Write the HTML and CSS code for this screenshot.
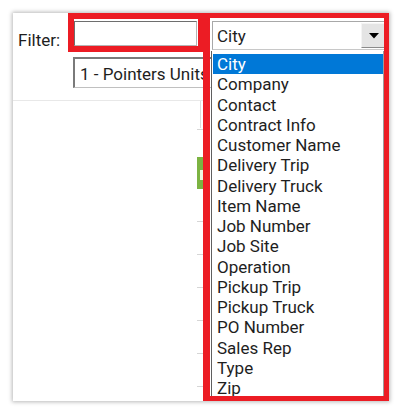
FILE: index.html
```html
<!DOCTYPE html>
<html>
<head>
<meta charset="utf-8">
<link rel="stylesheet" href="styles.css">
</head>
<body>
<div class="card">
  <div class="toolbar">
    <span class="label">Filter:</span>
    <div class="textbox"></div>
    <div class="combo combo-field">
      <span class="combo-text">City</span>
      <span class="combo-btn">
        <svg width="10" height="6" viewBox="0 0 10 6"><polygon points="0,0 10,0 5,5.5" fill="#000"/></svg>
      </span>
    </div>
  </div>
  <div class="row2">
    <div class="combo-unit"><span class="unit-text">1 - Pointers Units</span></div>
  </div>
  <div class="grid">
    <div class="grid-body"></div>
    <div class="grid-edge">
      <div class="vline"></div>
      <div class="tick t1"></div>
      <div class="green"><div class="notch"></div></div>
      <div class="tick t2"></div>
      <div class="tick t3"></div>
      <div class="tick t3"></div>
      <div class="tick t3"></div>
      <div class="tick t3"></div>
      <div class="tick t3"></div>
    </div>
  </div>

  <ul class="droplist">
    <li class="item selected">City</li>
    <li class="item">Company</li>
    <li class="item">Contact</li>
    <li class="item">Contract Info</li>
    <li class="item">Customer Name</li>
    <li class="item">Delivery Trip</li>
    <li class="item">Delivery Truck</li>
    <li class="item">Item Name</li>
    <li class="item">Job Number</li>
    <li class="item">Job Site</li>
    <li class="item">Operation</li>
    <li class="item">Pickup Trip</li>
    <li class="item">Pickup Truck</li>
    <li class="item">PO Number</li>
    <li class="item">Sales Rep</li>
    <li class="item">Type</li>
    <li class="item">Zip</li>
  </ul>

  <div class="mark mark-filter"></div>
  <div class="mark mark-list"></div>
</div>
</body>
</html>
```

FILE: styles.css
```css
html, body {
  margin: 0;
  padding: 0;
  background: #ffffff;
}
body {
  font-family: Roboto, "Noto Sans", sans-serif;
  color: #1e1e1e;
  width: 402px;
  height: 414px;
  overflow: hidden;
}
.card {
  position: relative;
  margin: 13px 0 0 13px;
  width: 376px;
  height: 388px;
  background: #ffffff;
  box-shadow: 0 0 4px 1px rgba(0, 0, 0, 0.28);
  display: flex;
  flex-direction: column;
}
.toolbar {
  display: flex;
  align-items: flex-start;
  padding: 8px 0 0 5px;
  height: 29px;
}
.label {
  width: 56px;
  font-size: 17px;
  line-height: 20px;
  margin-top: 9px;
}
.textbox {
  width: 121px;
  height: 23px;
  border: 1px solid #b4b4b4;
  border-top-color: #6e6e6e;
  border-left-color: #6e6e6e;
  background: #fff;
}
.combo-field {
  margin-left: 15px;
  width: 169px;
  height: 27px;
  border: 1px solid #a8a8a8;
  border-bottom-color: #c8c8c8;
  background: #fff;
  display: flex;
  align-items: center;
  justify-content: space-between;
  padding-left: 4px;
  box-sizing: content-box;
}
.combo-text {
  font-size: 17px;
  line-height: 20px;
  margin-top: 1px;
}
.combo-btn {
  width: 23px;
  height: 23px;
  background: #e4e4e4;
  border: 1px solid;
  border-color: #f4f4f4 #8a8a8a #8a8a8a #f4f4f4;
  display: flex;
  align-items: center;
  justify-content: center;
}
.row2 {
  margin-top: 7px;
  padding-left: 60px;
}
.combo-unit {
  width: 190px;
  height: 28px;
  border: 1px solid #c0c0c0;
  border-top: 2px solid #7a7a7a;
  border-left: 2px solid #7a7a7a;
  background: #fff;
  display: flex;
  align-items: center;
  padding-left: 5px;
  overflow: hidden;
  white-space: nowrap;
}
.unit-text {
  font-size: 17px;
  line-height: 20px;
  margin-top: 1px;
}
.grid {
  margin-top: 12px;
  width: 190px;
  flex: 1;
  display: flex;
  border-top: 1px solid #e8e8e8;
}
.grid-body {
  flex: 1;
}
.grid-edge {
  width: 6px;
  display: flex;
  flex-direction: column;
  align-items: flex-start;
}
.vline {
  margin-left: 3px;
  width: 1px;
  height: 27px;
  background: #dcdcdc;
}
.tick {
  width: 6px;
  height: 1px;
  background: #d6d6d6;
}
.t1 { margin-top: 1px; }
.green {
  margin-top: 27px;
  width: 6px;
  height: 32px;
  background: #7cb342;
  display: flex;
  flex-direction: column;
  align-items: flex-end;
}
.notch {
  margin-top: 13px;
  width: 3px;
  height: 10px;
  background: #eef6e4;
}
.t2 { margin-top: 32px; }
.t3 { margin-top: 32px; }

.droplist {
  position: absolute;
  left: 198px;
  top: 38px;
  width: 171px;
  height: 342px;
  margin: 0;
  padding: 3px 0 0 0;
  list-style: none;
  background: #fff;
  border-left: 1px solid #5f5f5f;
  border-right: 1px solid #9c9c9c;
  overflow: hidden;
}
.item {
  margin-left: 1px;
  height: 20.25px;
  line-height: 20.25px;
  padding-left: 4px;
  font-size: 17px;
  white-space: nowrap;
}
.item.selected {
  background: #0078d7;
  color: #ffffff;
}
.mark {
  position: absolute;
  box-sizing: border-box;
  border: 6px solid #ec1c24;
  pointer-events: none;
}
.mark-filter {
  left: 55px;
  top: 0;
  width: 136px;
  height: 39px;
}
.mark-list {
  left: 190px;
  top: 0;
  width: 186px;
  height: 388px;
  border-width: 5px 5px 5px 7px;
}
```
